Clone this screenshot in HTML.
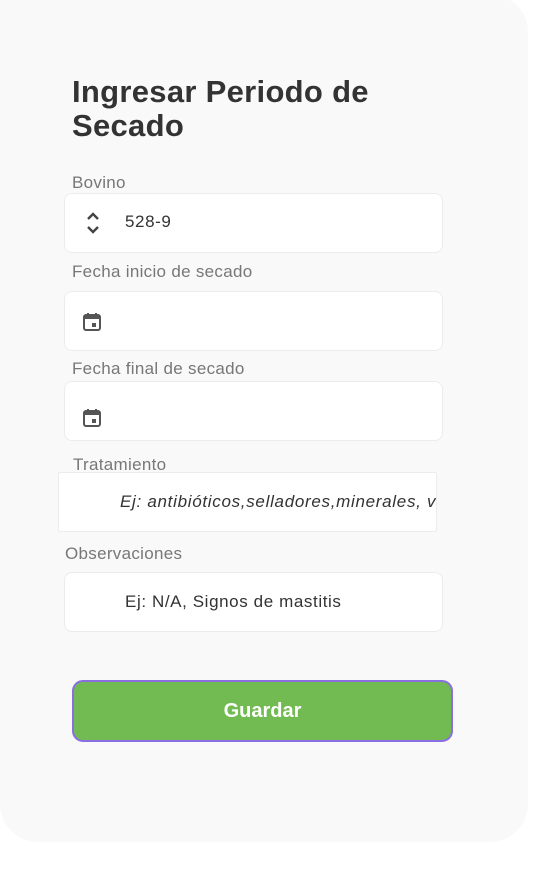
<!DOCTYPE html>
<html><head><meta charset="utf-8"><style>
body{margin:0;width:534px;height:871px;background:#fff;position:relative;overflow:hidden;font-family:"Liberation Sans",sans-serif;}
.card{position:absolute;left:0;top:-6px;width:528px;height:848px;background:#f9f9f9;border-radius:0 38px 38px 38px;}
h1{position:absolute;left:72px;top:75px;margin:0;font-size:31px;line-height:34px;font-weight:bold;color:#333;letter-spacing:0.3px;}
.lbl{position:absolute;font-size:17px;color:#777;letter-spacing:0.3px;}
.box{position:absolute;width:379px;height:60px;background:#fff;border:1px solid #ececec;border-radius:8px;box-sizing:border-box;}
.txt{position:absolute;font-size:17px;color:#333;letter-spacing:0.6px;}
.btn{position:absolute;left:72px;top:680px;width:381px;height:62px;background:#72bb52;border:2px solid #8a6fe0;border-radius:11px;box-sizing:border-box;color:#fff;font-weight:bold;font-size:20px;text-align:center;line-height:58px;}
</style></head><body>
<div class="card"></div>
<h1>Ingresar Periodo de<br>Secado</h1>
<div class="lbl" style="left:72px;top:173px">Bovino</div>
<div class="box" style="left:64px;top:193px"></div>
<svg style="position:absolute;left:86px;top:212px" width="14" height="22" viewBox="0 0 14 22"><path d="M2 7 L7 2 L12 7 M2 15 L7 20 L12 15" fill="none" stroke="#444" stroke-width="2.4"/></svg>
<div class="txt" style="left:125px;top:212px">528-9</div>
<div class="lbl" style="left:72px;top:262px">Fecha inicio de secado</div>
<div class="box" style="left:64px;top:291px"></div>
<svg style="position:absolute;left:82px;top:312px" width="20" height="20" viewBox="0 0 20 20"><rect x="2" y="3" width="16" height="15" rx="2" fill="none" stroke="#555" stroke-width="2"/><rect x="2" y="3" width="16" height="4" fill="#555"/><rect x="5" y="1" width="2" height="3" fill="#555"/><rect x="13" y="1" width="2" height="3" fill="#555"/><rect x="10" y="11" width="4" height="4" fill="#555"/></svg>
<div class="lbl" style="left:72px;top:359px">Fecha final de secado</div>
<div class="box" style="left:64px;top:381px"></div>
<svg style="position:absolute;left:82px;top:408px" width="20" height="20" viewBox="0 0 20 20"><rect x="2" y="3" width="16" height="15" rx="2" fill="none" stroke="#555" stroke-width="2"/><rect x="2" y="3" width="16" height="4" fill="#555"/><rect x="5" y="1" width="2" height="3" fill="#555"/><rect x="13" y="1" width="2" height="3" fill="#555"/><rect x="10" y="11" width="4" height="4" fill="#555"/></svg>
<div class="lbl" style="left:73px;top:455px">Tratamiento</div>
<div class="box" style="left:58px;top:472px;border-radius:2px;overflow:hidden"><div class="txt" style="left:61px;top:19px;font-style:italic;white-space:nowrap;letter-spacing:0.7px">Ej: antibióticos,selladores,minerales, vitaminas</div></div>
<div class="lbl" style="left:65px;top:544px">Observaciones</div>
<div class="box" style="left:64px;top:572px"></div>
<div class="txt" style="left:125px;top:592px">Ej: N/A, Signos de mastitis</div>
<div class="btn">Guardar</div>
</body></html>
